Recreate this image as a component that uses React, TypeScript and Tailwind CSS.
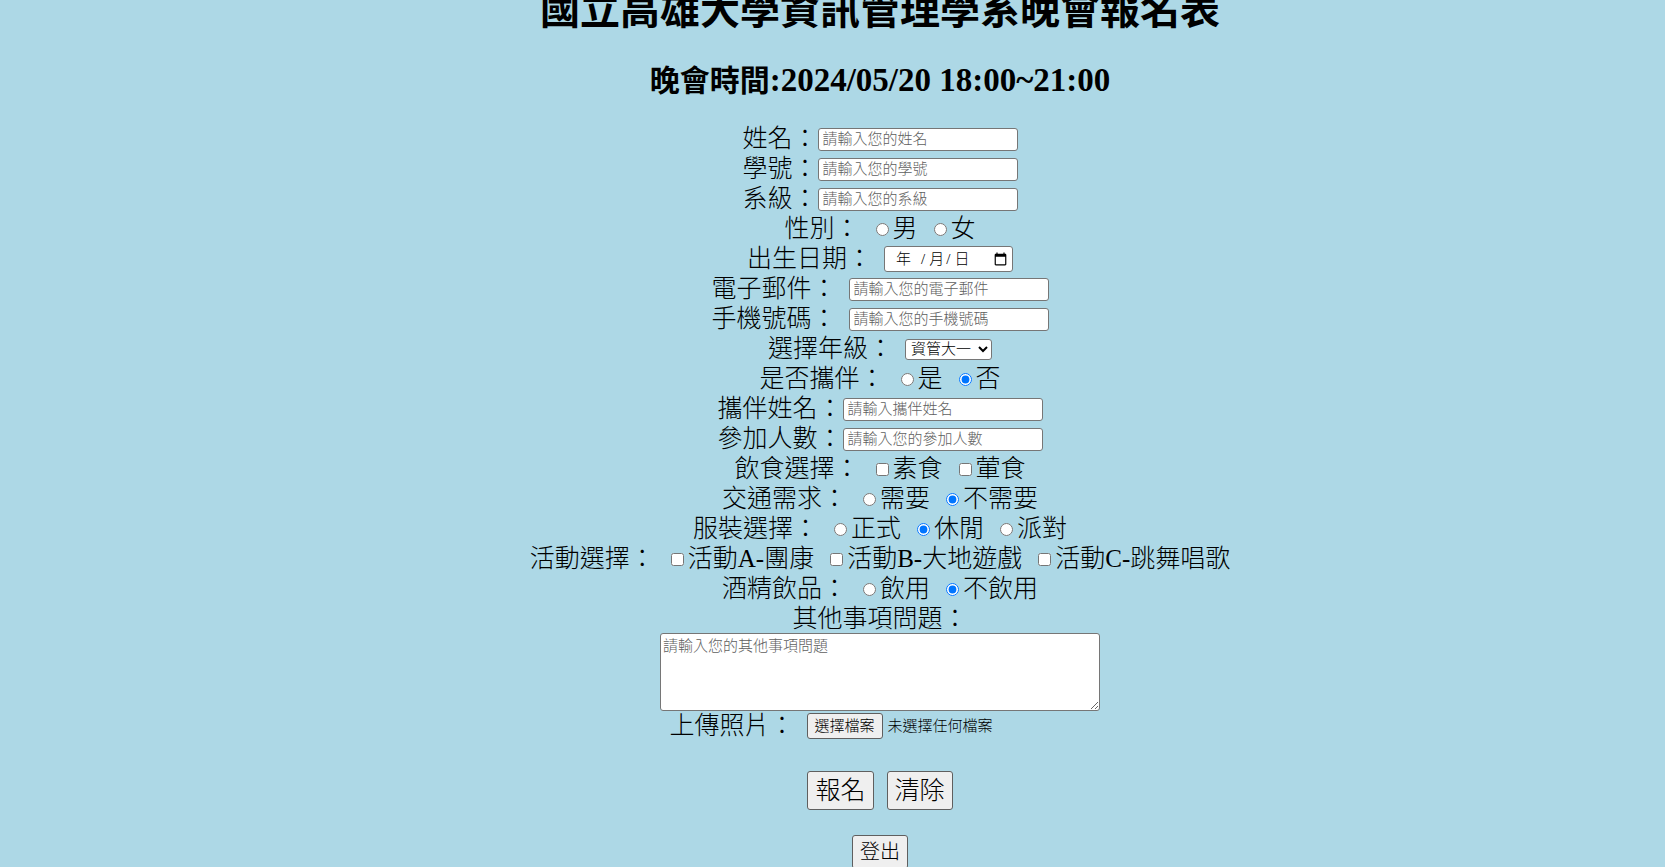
import type { ReactNode } from "react";

const fieldClass =
  "h-[23px] w-[200px] rounded-[3px] border border-[#767676] bg-white px-1 text-[15px] leading-5 text-black placeholder:text-[#606060] placeholder:opacity-100";

function Row({ children }: { children: ReactNode }) {
  return <div className="flex h-[30px] items-center justify-center whitespace-nowrap">{children}</div>;
}

type TextRowProps = { id: string; label: string; hint: string; type?: string; spaced?: boolean };

function TextRow({ id, label, hint, type = "text", spaced = false }: TextRowProps) {
  return (
    <Row>
      <label htmlFor={id} className={spaced ? "mr-3" : ""}>
        {label}：
      </label>
      <input id={id} name={id} type={type} placeholder={hint} className={fieldClass} />
    </Row>
  );
}

type ChoiceRowProps = {
  name: string;
  label: string;
  kind: "radio" | "checkbox";
  options: string[];
  selected?: string;
};

function ChoiceRow({ name, label, kind, options, selected }: ChoiceRowProps) {
  return (
    <fieldset className="flex h-[30px] items-center justify-center gap-4 whitespace-nowrap">
      <legend className="contents">
        <span>{label}：</span>
      </legend>
      {options.map((option) => (
        <label key={option} className="flex items-center gap-1">
          <input
            type={kind}
            name={name}
            value={option}
            defaultChecked={option === selected}
            className="size-[13px]"
          />
          {option}
        </label>
      ))}
    </fieldset>
  );
}

const buttonClass = "rounded-[3px] border border-[#5f5f5f] bg-[#efefef] text-black";

export default function App() {
  return (
    <main
      lang="zh-Hant"
      className="h-screen overflow-x-hidden overflow-y-auto bg-[#add8e6] pl-[95px] text-black [font-family:'Liberation_Serif','Noto_Sans_CJK_TC',serif] [scrollbar-width:none]"
    >
      <h1 className="-mt-[9px] text-center text-[40px] leading-10 font-bold">國立高雄大學資訊管理學系晚會報名表</h1>
      <h2 className="mt-[29px] text-center text-[30px] leading-10 font-bold">
        晚會時間<span className="text-[33px]">:2024/05/20 18:00~21:00</span>
      </h2>

      <form className="mt-[23px] text-[25px] leading-[30px] font-light">
        <TextRow id="name" label="姓名" hint="請輸入您的姓名" />
        <TextRow id="student-id" label="學號" hint="請輸入您的學號" />
        <TextRow id="department" label="系級" hint="請輸入您的系級" />
        <ChoiceRow name="gender" label="性別" kind="radio" options={["男", "女"]} />
        <Row>
          <label htmlFor="birthday" className="mr-3">
            出生日期：
          </label>
          <div className="relative">
            <input
              id="birthday"
              name="birthday"
              type="date"
              className="block h-[26px] w-[129px] rounded-[3px] border border-[#767676] bg-white pr-0.5 pl-1 text-[15px] [&::-webkit-calendar-picker-indicator]:size-[15px] [&::-webkit-datetime-edit]:opacity-0"
            />
            <span className="pointer-events-none absolute inset-y-0 left-3 flex items-center text-[15px]">
              <span className="mr-2.5">年</span>
              <span className="mr-1">/</span>
              <span className="mr-0.5">月</span>
              <span className="mr-1">/</span>
              <span>日</span>
            </span>
          </div>
        </Row>
        <TextRow id="email" label="電子郵件" hint="請輸入您的電子郵件" type="email" spaced />
        <TextRow id="phone" label="手機號碼" hint="請輸入您的手機號碼" type="tel" spaced />
        <Row>
          <label htmlFor="grade" className="mr-3">
            選擇年級：
          </label>
          <select
            id="grade"
            name="grade"
            className="h-[21px] w-[87px] rounded-[3px] border border-[#767676] bg-white pl-px text-[15px] leading-[19px] font-light"
          >
            <option>資管大一</option>
            <option>資管大二</option>
            <option>資管大三</option>
            <option>資管大四</option>
          </select>
        </Row>
        <ChoiceRow name="partner" label="是否攜伴" kind="radio" options={["是", "否"]} selected="否" />
        <TextRow id="partner-name" label="攜伴姓名" hint="請輸入攜伴姓名" />
        <TextRow id="headcount" label="參加人數" hint="請輸入您的參加人數" />
        <ChoiceRow name="diet" label="飲食選擇" kind="checkbox" options={["素食", "葷食"]} />
        <ChoiceRow name="transport" label="交通需求" kind="radio" options={["需要", "不需要"]} selected="不需要" />
        <ChoiceRow name="dress" label="服裝選擇" kind="radio" options={["正式", "休閒", "派對"]} selected="休閒" />
        <ChoiceRow
          name="activity"
          label="活動選擇"
          kind="checkbox"
          options={["活動A-團康", "活動B-大地遊戲", "活動C-跳舞唱歌"]}
        />
        <ChoiceRow name="alcohol" label="酒精飲品" kind="radio" options={["飲用", "不飲用"]} selected="不飲用" />
        <Row>
          <label htmlFor="notes">其他事項問題：</label>
        </Row>
        <textarea
          id="notes"
          name="notes"
          placeholder="請輸入您的其他事項問題"
          className="mx-auto -mt-px block h-[78px] w-[440px] rounded-[3px] border border-[#767676] bg-white px-0.5 py-0.5 text-[15px] leading-5 placeholder:text-[#606060] placeholder:opacity-100"
        />
        <Row>
          <span className="mr-3">上傳照片：</span>
          <div className="flex w-[284px] items-center gap-[5px] text-[15px]">
            <input id="photo" name="photo" type="file" className="sr-only" />
            <label htmlFor="photo" className={`${buttonClass} flex h-[26px] items-center px-[7px]`}>
              選擇檔案
            </label>
            <span>未選擇任何檔案</span>
          </div>
        </Row>
        <div className="mt-[30px] flex justify-center gap-[13px]">
          <button type="submit" className={`${buttonClass} h-[39px] px-[7px]`}>
            報名
          </button>
          <button type="reset" className={`${buttonClass} h-[39px] px-[7px]`}>
            清除
          </button>
        </div>
        <div className="mt-[25px] flex justify-center">
          <button type="button" className={`${buttonClass} h-[34px] px-[7px] text-xl`}>
            登出
          </button>
        </div>
      </form>
    </main>
  );
}
